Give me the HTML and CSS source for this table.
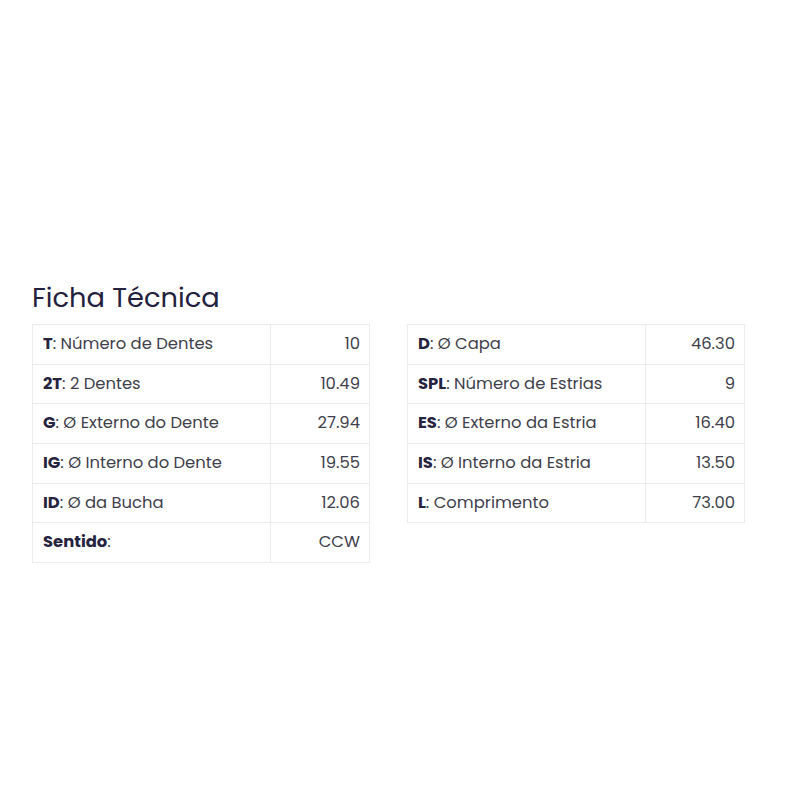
FILE: index.html
```html
<!DOCTYPE html>
<html lang="pt">
<head>
<meta charset="utf-8">
<link rel="stylesheet" href="styles.css">
</head>
<body>
<section class="ficha">
  <h2 class="title">Ficha Técnica</h2>
  <div class="tables">
    <table class="spec">
      <tr><td class="k"><b>T</b>: Número de Dentes</td><td class="v">10</td></tr>
      <tr><td class="k"><b>2T</b>: 2 Dentes</td><td class="v">10.49</td></tr>
      <tr><td class="k"><b>G</b>: Ø Externo do Dente</td><td class="v">27.94</td></tr>
      <tr><td class="k"><b>IG</b>: Ø Interno do Dente</td><td class="v">19.55</td></tr>
      <tr><td class="k"><b>ID</b>: Ø da Bucha</td><td class="v">12.06</td></tr>
      <tr><td class="k"><b>Sentido</b>:</td><td class="v">CCW</td></tr>
    </table>
    <table class="spec">
      <tr><td class="k"><b>D</b>: Ø Capa</td><td class="v">46.30</td></tr>
      <tr><td class="k"><b>SPL</b>: Número de Estrias</td><td class="v">9</td></tr>
      <tr><td class="k"><b>ES</b>: Ø Externo da Estria</td><td class="v">16.40</td></tr>
      <tr><td class="k"><b>IS</b>: Ø Interno da Estria</td><td class="v">13.50</td></tr>
      <tr><td class="k"><b>L</b>: Comprimento</td><td class="v">73.00</td></tr>
    </table>
  </div>
</section>
</body>
</html>
```
FILE: styles.css
```css
html, body {
  margin: 0;
  padding: 0;
  background: #ffffff;
}
body {
  font-family: Poppins, "Noto Sans", "Open Sans", sans-serif;
  color: #3f3f4c;
}
.ficha {
  padding: 281px 0 0 32px;
}
.title {
  margin: 0 0 9px 0;
  font-size: 27.3px;
  font-weight: 400;
  line-height: 34px;
  color: #23213d;
}
.tables {
  display: flex;
  gap: 37px;
  align-items: flex-start;
}
.spec {
  border-collapse: collapse;
  width: 338px;
  font-size: 16.4px;
}
.spec td {
  border: 1px solid #ececef;
  padding: 8px 9px 8px 10px;
  line-height: 22.67px;
}
.spec .k {
  width: 218px;
  text-align: left;
}
.spec .v {
  text-align: right;
}
.spec b {
  font-weight: 700;
  color: #26233f;
}
```
